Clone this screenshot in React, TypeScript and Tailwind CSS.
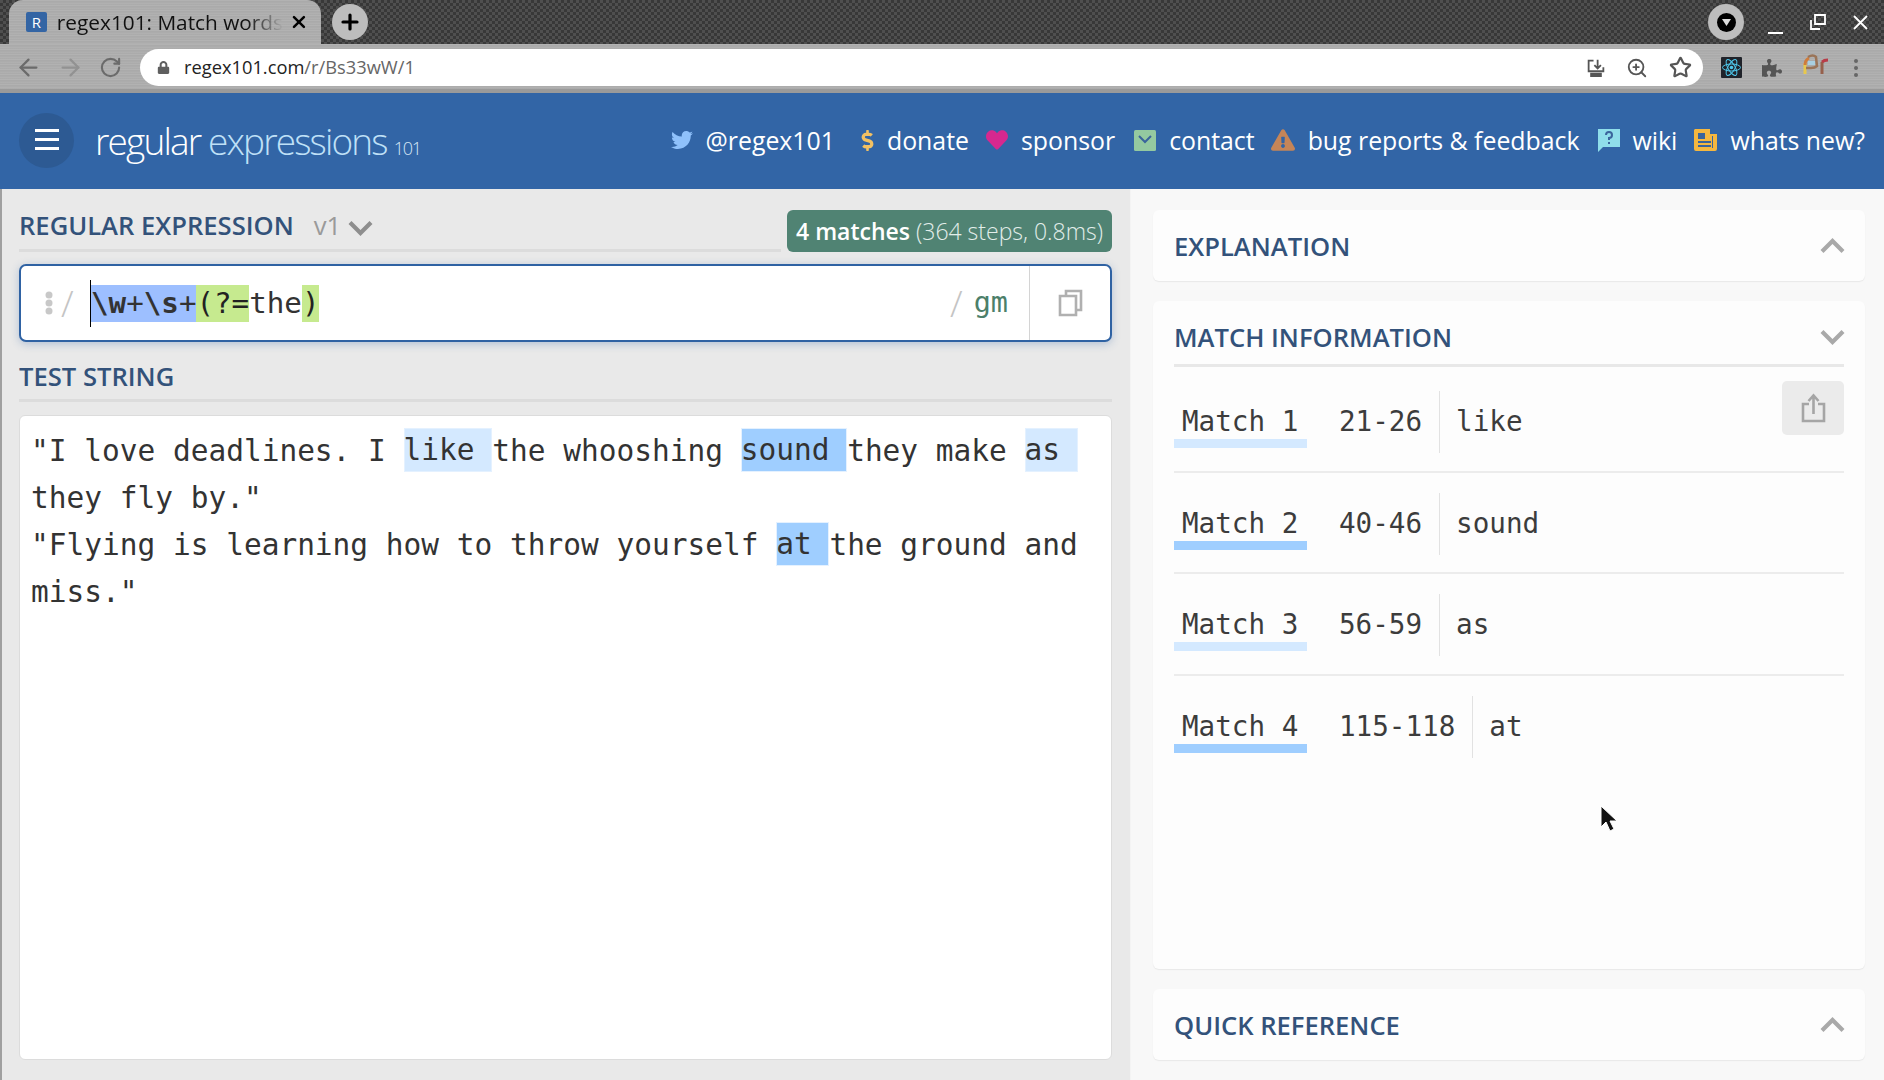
import React from "react";
import { ArrowLeft, ArrowRight, RotateCw, ZoomIn, Star, X, Plus } from "lucide-react";
import { FaTwitter, FaDollarSign, FaHeart, FaExclamationTriangle, FaLock, FaPuzzlePiece } from "react-icons/fa";

const metal =
  "bg-[#adadad] bg-[image:repeating-linear-gradient(180deg,#b6b6b6_0px,#a6a6a6_2px,#b2b2b2_3px,#a9a9a9_5px)]";

function NavItem({ icon, label }: { icon: React.ReactNode; label: string }) {
  return (
    <div className="flex items-center gap-[13px]">
      {icon}
      <span className="text-[24.85px] leading-[34px] text-white">{label}</span>
    </div>
  );
}

function Chevron({ up, color }: { up?: boolean; color: string }) {
  return (
    <svg width="25" height="15" viewBox="0 0 25 15" fill="none" stroke={color} strokeWidth="4.200" className="shrink-0">
      <path d={up ? "M2 13.500L12.500 3 23 13.500" : "M2 1.500L12.500 12 23 1.500"} />
    </svg>
  );
}

function Card({ title, up }: { title: string; up?: boolean }) {
  return (
    <div className="h-[71px] rounded-[6px] bg-[#fdfdfd] shadow-[0_1px_1px_#e8e8e8] pl-[21px] pr-[20px] flex items-center justify-between shrink-0">
      <h2 className="pt-[4px] text-[25.6px] font-semibold text-[#33527a]">{title}</h2>
      {up && <Chevron up color="#a9a9a9" />}
    </div>
  );
}

function MatchRow({ n, range, value, dark, last, share }: { n: number; range: string; value: string; dark?: boolean; last?: boolean; share?: boolean }) {
  return (
    <div className={`flex items-start h-[101.5px] shrink-0 font-['DejaVu_Sans_Mono',monospace] text-[27.6px] text-[#3c3c3c] ${last ? "" : "border-b-2 border-[#ececec]"}`}>
      <div className={`mt-[29px] w-[133px] h-[48px] pl-[8px] pt-[3px] leading-[38px] border-b-[9px] ${dark ? "border-[#9fceff]" : "border-[#d4e9ff]"}`}>
        Match {n}
      </div>
      <div className="mt-[20px] ml-[32px] h-[62px] flex items-center pr-[17px] border-r border-[#e2e2e2]">{range}</div>
      <div className="mt-[20px] h-[62px] flex items-center pl-[16px]">{value}</div>
      {share && (
        <div className="ml-auto mt-[10px] w-[62px] h-[54px] rounded-[5px] bg-[#ebebeb] flex items-center justify-center">
          <svg width="25" height="30" viewBox="0 0 25 30" fill="none" stroke="#a5a5a5" strokeWidth="2.600">
            <path d="M8 11H2v17h21V11h-6M12.500 21V3M7.500 8l5-5.500 5 5.500" />
          </svg>
        </div>
      )}
    </div>
  );
}

const hl = "inline-block h-[44px] leading-[44px] align-top outline-1 -outline-offset-1 outline-[#e4f1ff]";

export default function App() {
  return (
    <div className="relative w-[1884px] h-[1080px] overflow-hidden flex flex-col font-['Open_Sans',sans-serif] bg-[#e9e9e9]">
      {/* Tab strip */}
      <div className="h-[44px] shrink-0 flex items-end pl-[9px] pr-[10px] bg-[#414141] bg-[image:repeating-conic-gradient(#383838_0_25%,#4f4f4f_0_50%)] bg-[length:6px_6px]">
        <div className={`${metal} w-[312px] h-[44px] rounded-t-[14px] flex items-center pl-[17px] pr-[12px]`}>
          <div className="w-[21px] h-[20px] rounded-[2px] bg-[#3465a4] text-white text-[15px] leading-[20px] text-center">R</div>
          <div className="ml-[10px] w-[228px] overflow-hidden whitespace-nowrap text-[20.8px] leading-[32px] text-[#111] [mask-image:linear-gradient(to_right,black_84%,transparent)]">regex101: Match words</div>
          <X size={20} strokeWidth={3} className="ml-[6px] text-black" />
        </div>
        <div className="ml-[11px] mb-[4px] w-[36px] h-[36px] rounded-full bg-[#bdbdbd] flex items-center justify-center">
          <Plus size={24} strokeWidth={3.2} className="text-black" />
        </div>
        <div className="ml-auto mb-[4px] w-[36px] h-[36px] rounded-full bg-[#bdbdbd] flex items-center justify-center">
          <div className="w-[19px] h-[19px] rounded-full bg-black flex items-center justify-center">
            <svg width="9" height="7" viewBox="0 0 9 7"><path d="M0 0h9L4.500 7z" fill="#ddd" /></svg>
          </div>
        </div>
        <div className="flex items-center h-[44px] ml-[24px] gap-[27px] pr-[6px]">
          <svg width="15" height="16" viewBox="0 0 15 16" className="mt-[12px]"><path d="M0 13h15" stroke="#fff" strokeWidth="2" /></svg>
          <svg width="16" height="16" viewBox="0 0 16 16"><path d="M1 6v9h9M5 1h10v9H5z" stroke="#fff" strokeWidth="1.800" fill="none" /></svg>
          <svg width="15" height="15" viewBox="0 0 15 15"><path d="M1 1l13 13M14 1L1 14" stroke="#fff" strokeWidth="1.800" /></svg>
        </div>
      </div>

      {/* Toolbar */}
      <div className={`${metal} h-[49px] shrink-0 flex items-start pt-[5px] pl-[15px] pr-[18px] border-b-[4px] border-[#9a9a9a]`}>
        <div className="flex items-center h-[37px] gap-[15px] text-[#6b6b6b]">
          <ArrowLeft size={27} strokeWidth={2} />
          <ArrowRight size={27} strokeWidth={2} className="text-[#929292]" />
          <RotateCw size={23} strokeWidth={2.200} />
        </div>
        <div className="ml-[18px] w-[1563px] h-[37px] rounded-full bg-white flex items-center pl-[17px] pr-[11px]">
          <FaLock size={13} className="text-[#5f5f5f]" />
          <div className="ml-[14px] -mt-[1px] text-[18.3px] text-[#222]">
            regex101.com<span className="text-[#666]">/r/Bs33wW/1</span>
          </div>
          <div className="ml-auto flex items-center gap-[21px] text-[#555]">
            <svg width="18" height="20" viewBox="0 0 22 24" fill="none" stroke="#555" strokeWidth="2.200"><path d="M8 3H2v13h18v-5M13 2v10M9 8.500l4 4 4-4" /><path d="M5 19h12v3H5z" fill="#555" /></svg>
            <ZoomIn size={22} strokeWidth={2} />
            <Star size={23} strokeWidth={2.300} />
          </div>
        </div>
        <div className="ml-[18px] flex items-center h-[37px] gap-[20px]">
          <svg width="21" height="21" viewBox="0 0 21 21">
            <rect width="21" height="21" rx="1" fill="#20232a" />
            <g fill="none" stroke="#4fc8ec" strokeWidth="1">
              <ellipse cx="10.500" cy="10.500" rx="9" ry="3.500" />
              <ellipse cx="10.500" cy="10.500" rx="9" ry="3.500" transform="rotate(60 10.500 10.500)" />
              <ellipse cx="10.500" cy="10.500" rx="9" ry="3.500" transform="rotate(120 10.500 10.500)" />
            </g>
            <circle cx="10.500" cy="10.500" r="1.800" fill="#4fc8ec" />
          </svg>
          <FaPuzzlePiece size={20} className="text-[#555]" />
          <svg width="28" height="21" viewBox="0 0 28 21" className="-mt-[7px]">
            <path d="M3 20V9" fill="none" stroke="#e8c84c" strokeWidth="3" />
            <path d="M3 11q0-5 4-7" fill="none" stroke="#cf7c3c" strokeWidth="3" />
            <path d="M6 3q5-3 8 0l1 9q-2 2-6 2H4" fill="none" stroke="#9a7458" strokeWidth="2.500" />
            <path d="M6 7h7v4H6z" fill="#a9cfe0" />
            <path d="M20 20V8" stroke="#96604c" strokeWidth="3" />
            <path d="M20 8q2-2 6-2" fill="none" stroke="#b83c48" strokeWidth="3" />
          </svg>
          <svg width="6" height="20" viewBox="0 0 6 20" className="ml-[3px]" fill="#666"><circle cx="3" cy="3" r="2" /><circle cx="3" cy="10" r="2" /><circle cx="3" cy="17" r="2" /></svg>
        </div>
      </div>

      {/* Site header */}
      <header className="h-[96px] shrink-0 bg-[#3265a6] flex items-center pl-[19px] pr-[19px]">
        <div className="w-[55px] h-[55px] rounded-full bg-[#2d5a93] flex flex-col items-center justify-center gap-[6px] -mt-[2px]">
          <div className="w-[24px] h-[3px] bg-white -mt-[2px]" />
          <div className="w-[24px] h-[3px] bg-white" />
          <div className="w-[24px] h-[3px] bg-white" />
        </div>
        <div className="ml-[21px] whitespace-nowrap font-light text-[37px] tracking-[-1.85px] text-white">
          regular <span className="text-[#bfe0f7]">expressions</span>
          <span className="ml-[7px] text-[18px] tracking-[-1.2px] text-[#d5e6f5]">101</span>
        </div>
        <nav className="ml-auto flex items-center gap-[19px] -mt-[2px]">
          <NavItem label="@regex101" icon={<FaTwitter size={22} className="text-[#8fc1fb]" />} />
          <div className="ml-[7px]"><NavItem label="donate" icon={<FaDollarSign size={21} className="w-[13px] text-[#f3c163]" />} /></div>
          <div className="-ml-[2px]"><NavItem label="sponsor" icon={<FaHeart size={22} className="text-[#d6288f]" />} /></div>
          <NavItem
            label="contact"
            icon={
              <svg width="22" height="21" viewBox="0 0 22 21">
                <rect width="22" height="21" rx="1.500" fill="#94c9a0" />
                <path d="M5 6l6 6 6-6" fill="none" stroke="#3a649c" strokeWidth="2" />
              </svg>
            }
          />
          <div className="-ml-[3px]"><NavItem label="bug reports & feedback" icon={<FaExclamationTriangle size={24} className="text-[#c58558]" />} /></div>
          <div className="-ml-[1px]">
            <NavItem
              label="wiki"
              icon={
                <svg width="22" height="23" viewBox="0 0 22 23">
                  <path d="M0 0h22v18H5l-5 5z" fill="#8fdeea" />
                  <path d="M8 6q0-3 3-3t3 3-3 3v2" fill="none" stroke="#3a649c" strokeWidth="2" />
                  <rect x="10" y="13" width="2" height="2" fill="#3a649c" />
                </svg>
              }
            />
          </div>
          <div className="-ml-[2px]">
            <NavItem
              label="whats new?"
              icon={
                <svg width="23" height="22" viewBox="0 0 23 22">
                  <path d="M1 0h15v5h7v15a2 2 0 0 1-2 2H2a2 2 0 0 1-2-2V1z" fill="#f5b73f" />
                  <rect x="4" y="4" width="7" height="6" fill="#3a649c" />
                  <path d="M4 13h13M4 17h13" stroke="#3a649c" strokeWidth="2" />
                  <path d="M18.500 7v12" stroke="#3a649c" strokeWidth="1" />
                </svg>
              }
            />
          </div>
        </nav>
      </header>

      {/* Main */}
      <main className="flex-1 flex min-h-0 border-l-[2px] border-[#a0a0a0]">
        <section className="w-[1129px] shrink-0 pl-[17px] pr-[18px] flex flex-col bg-[#e9e9e9] border-r border-[#f4f4f4]">
          <div className="mt-[21px] flex shrink-0">
            <div className="flex-1 h-[42px] border-b-[3px] border-[#dcdcdc] flex items-start">
              <h2 className="text-[25.6px] leading-[32px] font-semibold text-[#33527a]">REGULAR EXPRESSION</h2>
              <span className="ml-[20px] text-[25.6px] leading-[32px] text-[#9a9a9a]">v1</span>
              <div className="ml-[7px] mt-[11px]"><Chevron color="#8e8e8e" /></div>
            </div>
            <div className="ml-[6px] h-[42px] px-[9px] rounded-[6px] bg-[#508373] flex items-center text-[23px] text-[#e2eeea] whitespace-nowrap">
              <b className="font-semibold text-white">4 matches</b>
              <span className="ml-[6px] font-light">(364 steps, 0.8ms)</span>
            </div>
          </div>

          <div className="mt-[12px] h-[78px] shrink-0 bg-white border-2 border-[#2f62a3] rounded-[7px] shadow-[0_2px_8px_rgba(50,100,170,0.3)] flex items-center">
            <svg width="8" height="24" viewBox="0 0 8 24" className="ml-[24px]" fill="#c8c8c8"><circle cx="4" cy="4" r="3.500" /><circle cx="4" cy="12" r="3.500" /><circle cx="4" cy="20" r="3.500" /></svg>
            <span className="ml-[8px] w-[22px] text-[37px] leading-[44px] font-light text-[#c4c4c4]">/</span>
            <div className="relative ml-[8px] mt-[1px] font-['DejaVu_Sans_Mono',monospace] text-[29.2px] leading-[37px] text-[#333] whitespace-pre">
              <span className="absolute -left-[1px] -top-[5px] w-px h-[47px] bg-black" />
              <span className="bg-[#9dbfff] inline-block"><b className="font-bold">\w</b>+<b className="font-bold">\s</b>+</span>
              <span className="bg-[#c6ea8f] inline-block text-[#222]">(?=</span>
              the
              <span className="bg-[#c6ea8f] inline-block text-[#222]">)</span>
            </div>
            <span className="ml-auto text-[37px] leading-[44px] font-light text-[#c4c4c4]">/</span>
            <span className="ml-[11px] font-['DejaVu_Sans_Mono',monospace] text-[28.5px] text-[#4c7f6a]">gm</span>
            <div className="ml-[21px] h-full w-[81px] border-l border-[#d4d4d4] flex items-center justify-center">
              <svg width="25" height="28" viewBox="0 0 25 28" fill="none" stroke="#b0b0b0" strokeWidth="2.600">
                <path d="M8 6V2h15v19h-5" />
                <path d="M2 7h16v19H2z" />
              </svg>
            </div>
          </div>

          <div className="h-[60px] shrink-0 pt-[19px] border-b-[3px] border-[#dcdcdc]">
            <h2 className="text-[25.6px] leading-[32px] font-semibold text-[#33527a]">TEST STRING</h2>
          </div>

          <div className="mt-[13px] mb-[20px] flex-1 min-h-0 bg-white border border-[#dcdcdc] rounded-[6px] pl-[11px] pt-[12px] font-['DejaVu_Sans_Mono',monospace] text-[29.48px] leading-[47px] text-[#333] whitespace-pre">
            <div>"I love deadlines. I <span className={`${hl} bg-[#d4e9ff]`}>like </span>the whooshing <span className={`${hl} bg-[#9fceff]`}>sound </span>they make <span className={`${hl} bg-[#d4e9ff]`}>as </span></div>
            <div>they fly by."</div>
            <div>"Flying is learning how to throw yourself <span className={`${hl} bg-[#9fceff]`}>at </span>the ground and</div>
            <div>miss."</div>
          </div>
        </section>

        <aside className="flex-1 min-w-0 bg-[#f8f8f8] pl-[22px] pr-[19px] pt-[21px] pb-[20px] flex flex-col gap-[20px]">
          <Card title="EXPLANATION" up />
          <div className="flex-1 min-h-0 rounded-[6px] bg-[#fdfdfd] shadow-[0_1px_1px_#e8e8e8] px-[21px] flex flex-col">
            <div className="h-[66px] shrink-0 flex items-center justify-between pt-[12px] border-b-[3px] border-[#e8e8e8]">
              <h2 className="text-[25.6px] font-semibold text-[#33527a]">MATCH INFORMATION</h2>
              <div className="-mt-[3px] mr-[-1px]"><Chevron color="#a9a9a9" /></div>
            </div>
            <div className="h-[4px] shrink-0" />
            <MatchRow n={1} range="21-26" value="like" share />
            <MatchRow n={2} range="40-46" value="sound" dark />
            <MatchRow n={3} range="56-59" value="as" />
            <MatchRow n={4} range="115-118" value="at" dark last />
          </div>
          <Card title="QUICK REFERENCE" up />
        </aside>
      </main>

      {/* Mouse pointer */}
      <svg width="18" height="28" viewBox="0 0 18 28" className="absolute left-[1600px] top-[805px]">
        <path d="M1 1v21l5-5 4 9 4-2-4-8h7z" fill="#111" stroke="#fff" strokeWidth="1" />
      </svg>
    </div>
  );
}
